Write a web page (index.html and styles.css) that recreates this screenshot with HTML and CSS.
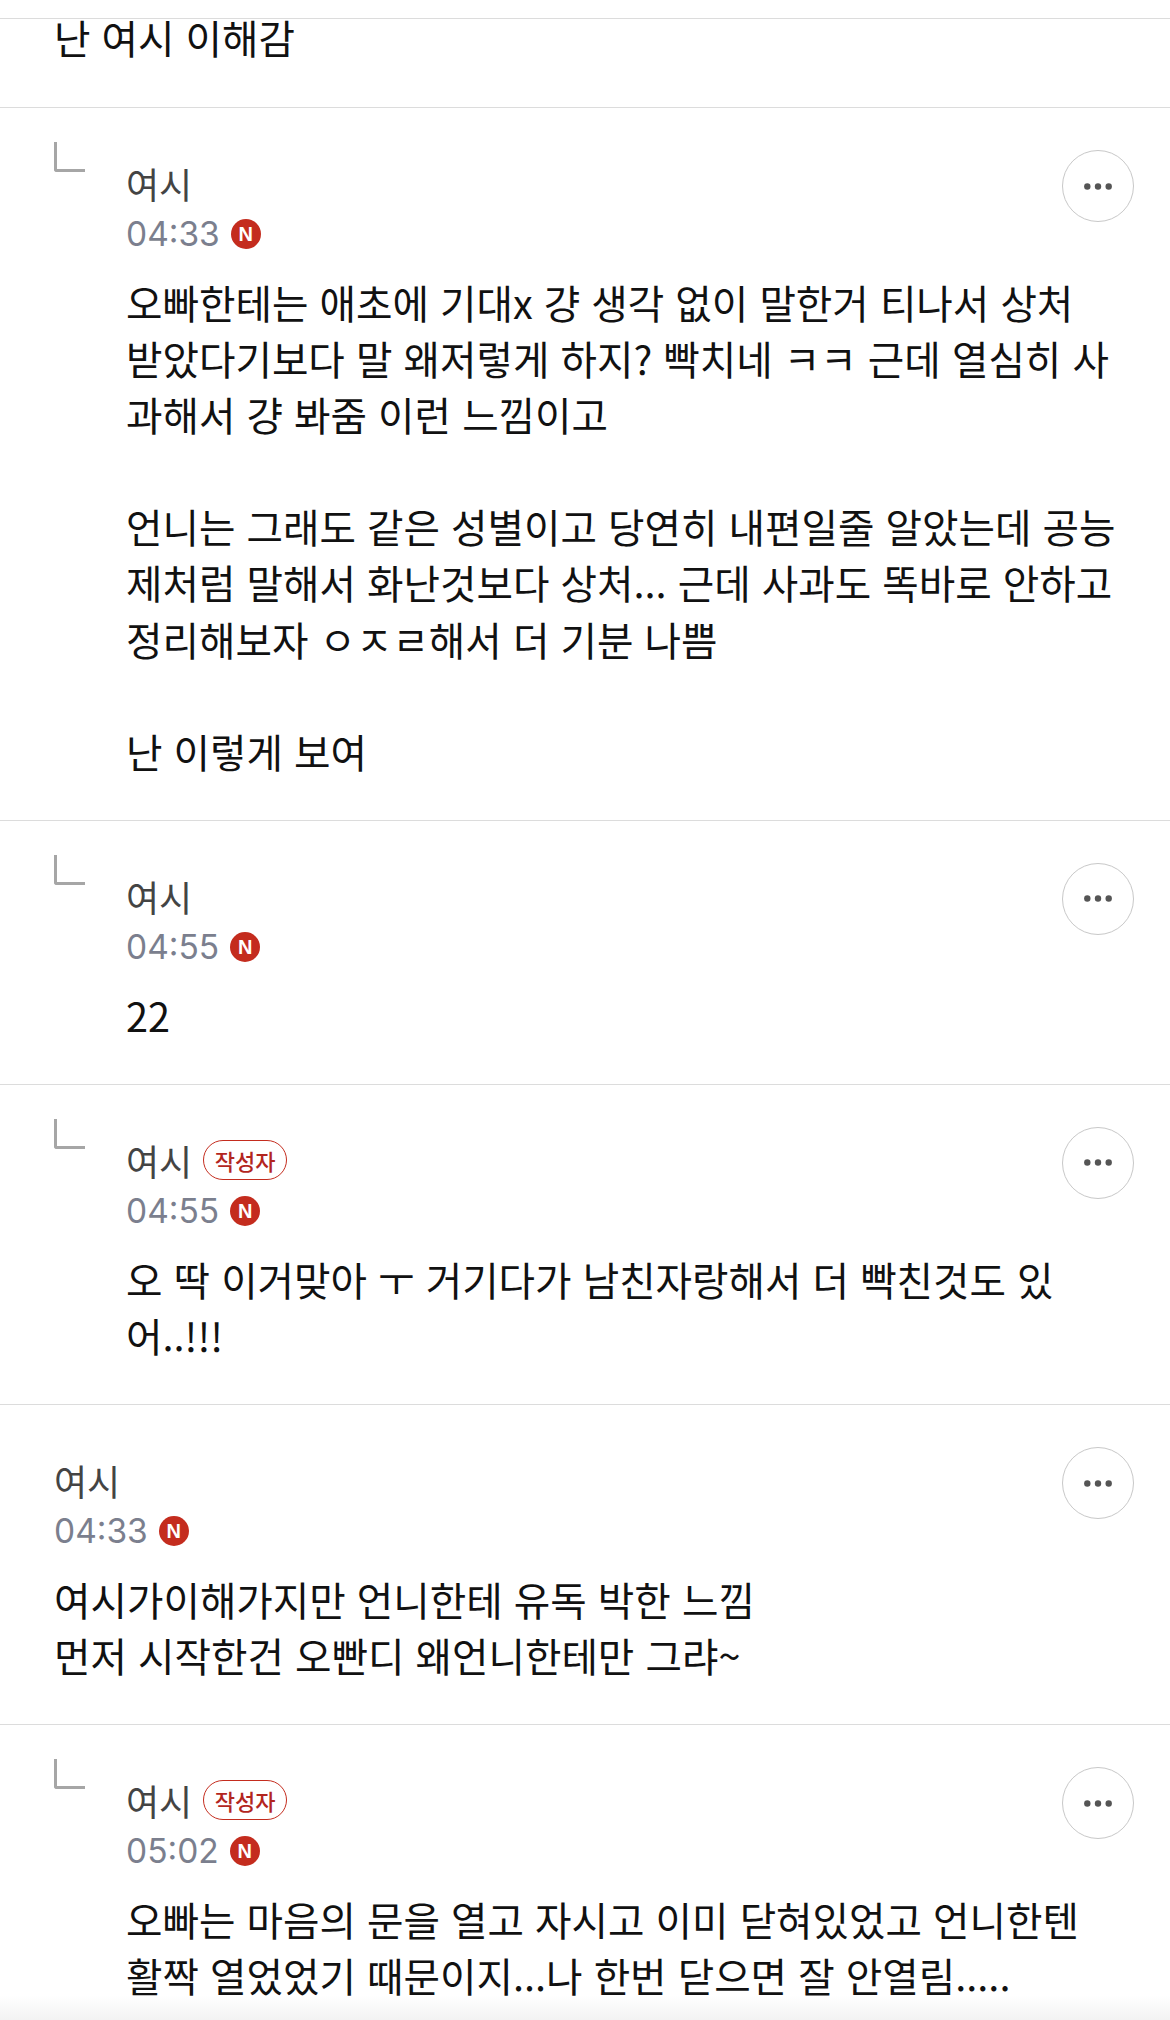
FILE: index.html
```html
<!DOCTYPE html>
<html lang="ko">
<head>
    <meta charset="UTF-8">
    <meta name="viewport" content="width=device-width, initial-scale=1.0">
    <title>댓글</title>
    <link rel="stylesheet" href="styles.css">
</head>
<body>
<div class="top-bar"></div>

<div class="comment comment-cut">
    <p class="comment-text">난 여시 이해감</p>
</div>

<div class="comment">
    <div class="reply-mark"></div>
    <div class="comment-body">
        <div class="comment-head">
            <div class="comment-info">
                <div class="name-line"><span class="name">여시</span></div>
                <div class="time-line"><span class="time">04:33</span><span class="new-badge">N</span></div>
            </div>
            <button class="more-button"><svg width="28" height="7" viewBox="0 0 28 7"><circle cx="3.3" cy="3.5" r="3.2"/><circle cx="14" cy="3.5" r="3.2"/><circle cx="24.7" cy="3.5" r="3.2"/></svg></button>
        </div>
        <p class="comment-text">오빠한테는 애초에 기대x 걍 생각 없이 말한거 티나서 상처<br>받았다기보다 말 왜저렇게 하지? 빡치네 ㅋㅋ 근데 열심히 사<br>과해서 걍 봐줌 이런 느낌이고<br><br>언니는 그래도 같은 성별이고 당연히 내편일줄 알았는데 공능<br>제처럼 말해서 화난것보다 상처... 근데 사과도 똑바로 안하고<br>정리해보자 ㅇㅈㄹ해서 더 기분 나쁨<br><br>난 이렇게 보여</p>
    </div>
</div>

<div class="comment">
    <div class="reply-mark"></div>
    <div class="comment-body">
        <div class="comment-head">
            <div class="comment-info">
                <div class="name-line"><span class="name">여시</span></div>
                <div class="time-line"><span class="time">04:55</span><span class="new-badge">N</span></div>
            </div>
            <button class="more-button"><svg width="28" height="7" viewBox="0 0 28 7"><circle cx="3.3" cy="3.5" r="3.2"/><circle cx="14" cy="3.5" r="3.2"/><circle cx="24.7" cy="3.5" r="3.2"/></svg></button>
        </div>
        <p class="comment-text">22</p>
    </div>
</div>

<div class="comment">
    <div class="reply-mark"></div>
    <div class="comment-body">
        <div class="comment-head">
            <div class="comment-info">
                <div class="name-line"><span class="name">여시</span><span class="writer-badge">작성자</span></div>
                <div class="time-line"><span class="time">04:55</span><span class="new-badge">N</span></div>
            </div>
            <button class="more-button"><svg width="28" height="7" viewBox="0 0 28 7"><circle cx="3.3" cy="3.5" r="3.2"/><circle cx="14" cy="3.5" r="3.2"/><circle cx="24.7" cy="3.5" r="3.2"/></svg></button>
        </div>
        <p class="comment-text">오 딱 이거맞아 ㅜ 거기다가 남친자랑해서 더 빡친것도 있<br>어..!!!</p>
    </div>
</div>

<div class="comment">
    <div class="comment-body">
        <div class="comment-head">
            <div class="comment-info">
                <div class="name-line"><span class="name">여시</span></div>
                <div class="time-line"><span class="time">04:33</span><span class="new-badge">N</span></div>
            </div>
            <button class="more-button"><svg width="28" height="7" viewBox="0 0 28 7"><circle cx="3.3" cy="3.5" r="3.2"/><circle cx="14" cy="3.5" r="3.2"/><circle cx="24.7" cy="3.5" r="3.2"/></svg></button>
        </div>
        <p class="comment-text">여시가이해가지만 언니한테 유독 박한 느낌<br>먼저 시작한건 오빤디 왜언니한테만 그랴~</p>
    </div>
</div>

<div class="comment">
    <div class="reply-mark"></div>
    <div class="comment-body">
        <div class="comment-head">
            <div class="comment-info">
                <div class="name-line"><span class="name">여시</span><span class="writer-badge">작성자</span></div>
                <div class="time-line"><span class="time">05:02</span><span class="new-badge">N</span></div>
            </div>
            <button class="more-button"><svg width="28" height="7" viewBox="0 0 28 7"><circle cx="3.3" cy="3.5" r="3.2"/><circle cx="14" cy="3.5" r="3.2"/><circle cx="24.7" cy="3.5" r="3.2"/></svg></button>
        </div>
        <p class="comment-text">오빠는 마음의 문을 열고 자시고 이미 닫혀있었고 언니한텐<br>활짝 열었었기 때문이지...나 한번 닫으면 잘 안열림.....</p>
    </div>
</div>

<div class="bottom-fade"></div>
</body>
</html>
```

FILE: styles.css
```css
:root {
    --line-color: #dcdcdc;
    --text-color: #111111;
    --name-color: #444444;
    --time-color: #7b7f8e;
    --red-color: #c42c1e;
}
html, body {
    height: 2020px;
    overflow: hidden;
}
body {
    font-family: "Noto Sans CJK KR", "Noto Sans", sans-serif;
    background: #FFFFFF;
    color: var(--text-color);
    margin: 0;
    position: relative;
}
.top-bar {
    height: 18px;
    border-bottom: 1px solid var(--line-color);
}
.comment {
    display: flex;
    padding: 42px 36px 41px 54px;
    border-bottom: 1px solid var(--line-color);
}
.comment-cut {
    padding-top: 0;
    height: 89px;
    box-sizing: border-box;
}
.reply-mark {
    flex: none;
    width: 31px;
    height: 30px;
    margin: -8px 41px 0 0;
    border-left: 3px solid #a6a6a6;
    border-bottom: 3px solid #a6a6a6;
    border-bottom-left-radius: 3px;
    box-sizing: border-box;
}
.comment-body {
    flex: 1;
    min-width: 0;
}
.comment-head {
    display: flex;
    justify-content: space-between;
    align-items: flex-start;
}
.name-line {
    display: flex;
    align-items: center;
    gap: 11px;
    height: 58px;
    margin-top: 4px;
}
.name {
    font-size: 36px;
    color: var(--name-color);
}
.writer-badge {
    font-size: 22px;
    font-weight: 500;
    line-height: 38px;
    padding: 0 10.5px;
    color: #b3261e;
    border: 1.5px solid var(--red-color);
    border-radius: 21px;
}
.time-line {
    display: flex;
    align-items: center;
    gap: 11px;
    height: 44px;
}
.time {
    font-family: Inter, "Liberation Sans", sans-serif;
    font-size: 33.5px;
    color: var(--time-color);
}
.new-badge {
    width: 30px;
    height: 30px;
    border-radius: 50%;
    background: var(--red-color);
    color: #FFFFFF;
    font-family: "Liberation Sans", sans-serif;
    font-size: 20px;
    font-weight: 700;
    line-height: 30px;
    text-align: center;
}
.more-button {
    flex: none;
    width: 72px;
    height: 72px;
    padding: 0;
    background: #FFFFFF;
    border: 1.5px solid #c8c8c8;
    border-radius: 50%;
    fill: #555555;
}
.more-button svg {
    display: block;
    margin: 0 auto;
}
.comment-text {
    margin: 18px 0 0;
    font-size: 39.65px;
    line-height: 56.1px;
    white-space: nowrap;
}
.comment-cut .comment-text {
    margin: -10px 0 0;
}
.bottom-fade {
    position: absolute;
    left: 0;
    right: 0;
    bottom: 0;
    height: 24px;
    background: linear-gradient(rgba(240, 240, 240, 0), #f3f3f3);
}
```
